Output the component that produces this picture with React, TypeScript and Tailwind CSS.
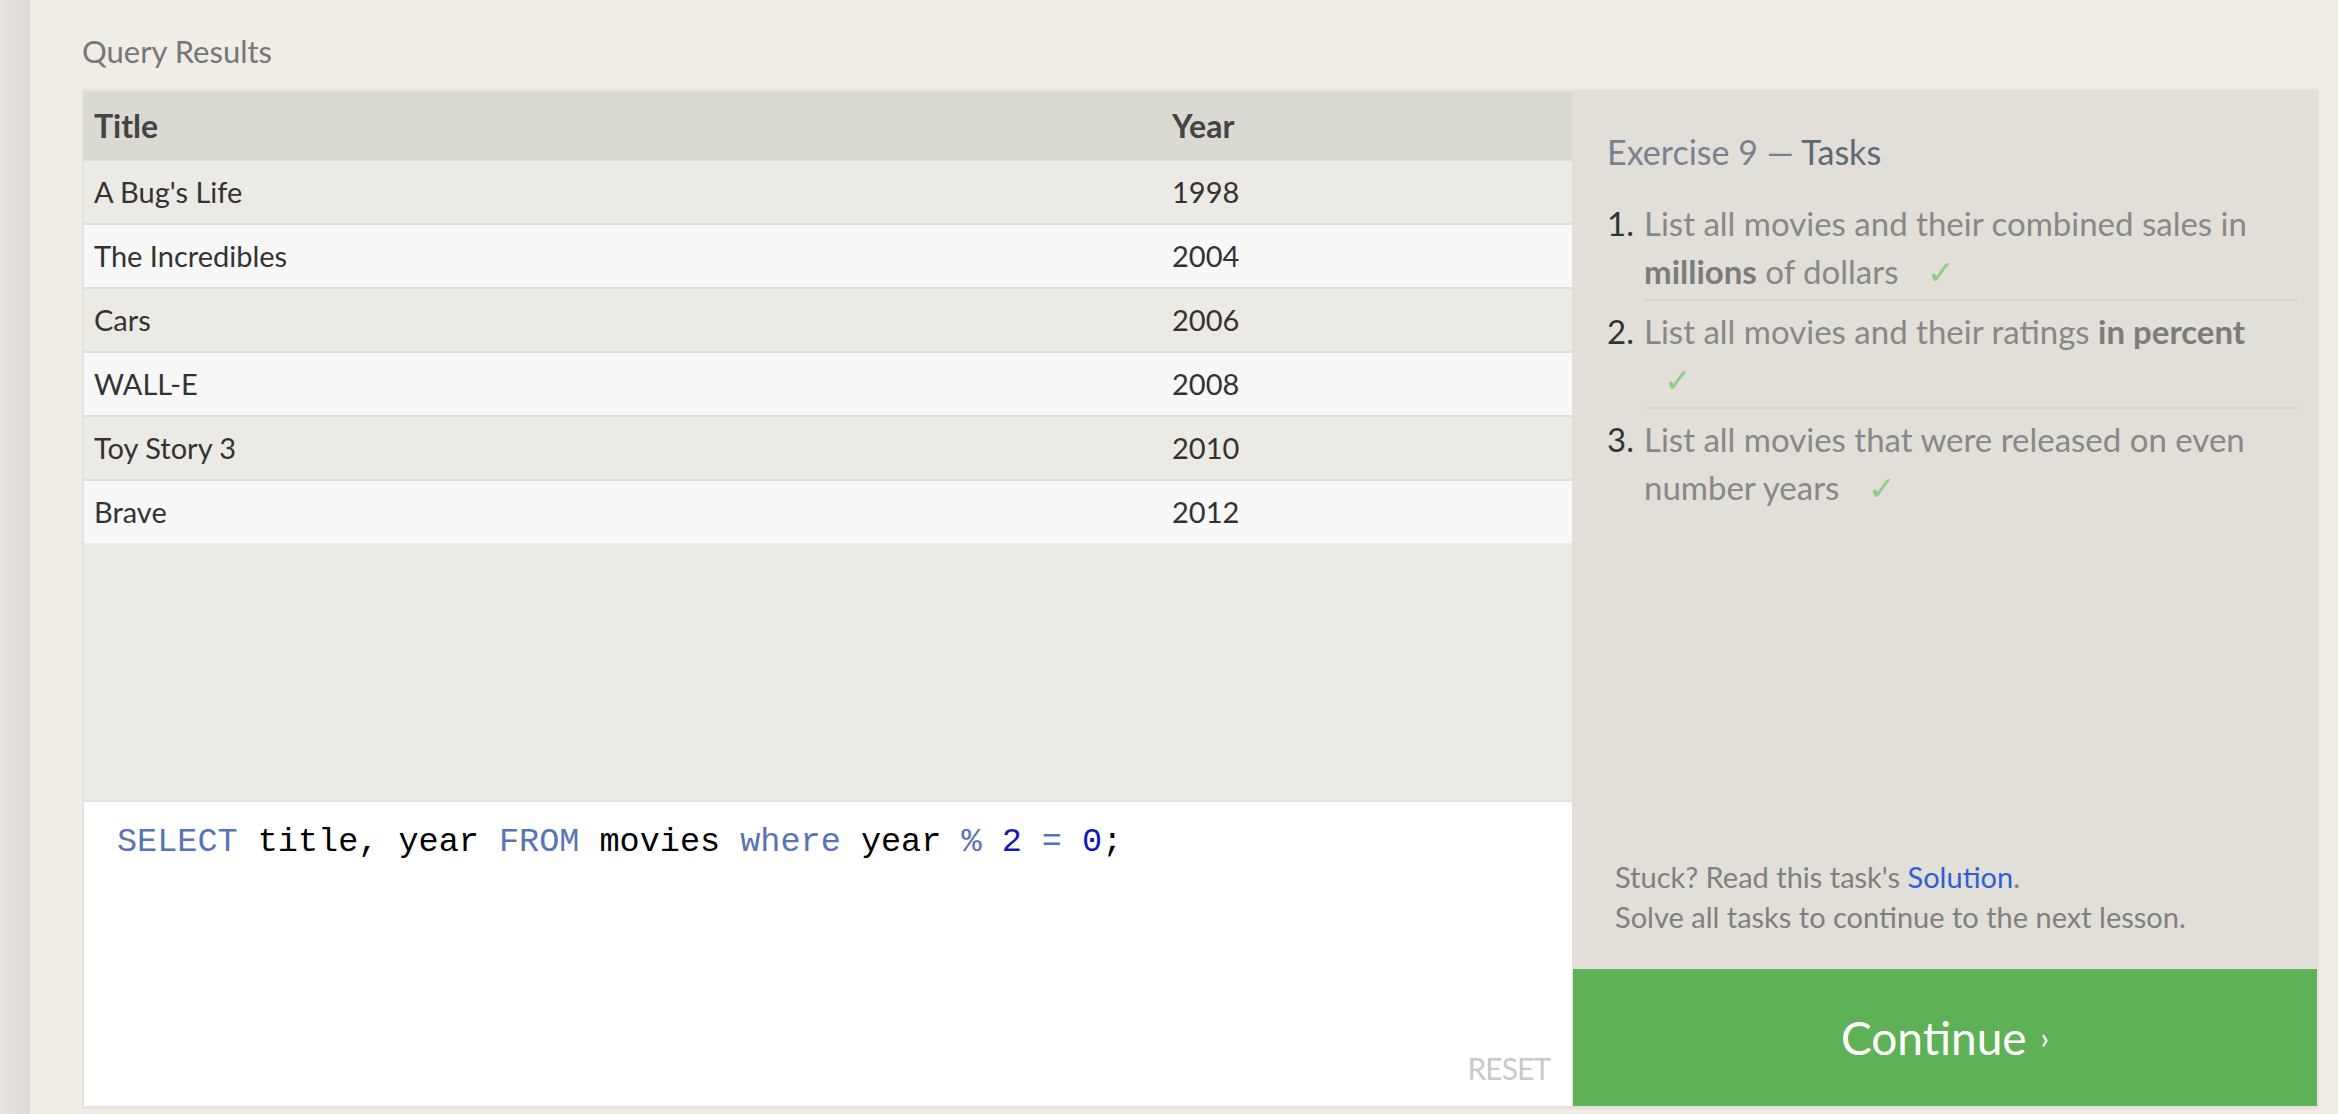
import { Fragment } from 'react';

const sans = { fontFamily: 'Lato, "Liberation Sans", sans-serif' };

const movies = [
  { title: "A Bug's Life", year: 1998 },
  { title: 'The Incredibles', year: 2004 },
  { title: 'Cars', year: 2006 },
  { title: 'WALL-E', year: 2008 },
  { title: 'Toy Story 3', year: 2010 },
  { title: 'Brave', year: 2012 },
];

function Check() {
  return (
    <>
      {' '}
      <span className="ml-[20px] text-[#8fcc88]">✓</span>
    </>
  );
}

export default function App() {
  return (
    <div
      className="flex h-[1114px] w-full overflow-hidden bg-[#efede6]"
      style={sans}
    >
      {/* left gutter */}
      <div className="w-[30px] shrink-0 bg-gradient-to-r from-[#e7e4e0] to-[#dedbd6]" />

      <div className="flex flex-1 flex-col pl-[52px] pr-[19px]">
        <h2 className="mt-[33px] h-[56px] shrink-0 text-[31px] leading-[36px] text-[#777]">
          Query Results
        </h2>

        <div className="flex h-[1020px] shrink-0 border-x-2 border-y-[3px] border-[#e3e2dc]">
          {/* results + editor */}
          <div className="flex w-[1488px] shrink-0 flex-col">
            <div className="h-[708px] bg-[#ebeae4]">
              <div className="grid grid-cols-[1078px_1fr]">
                <div className="flex h-[67px] items-center bg-[#dadad2] pl-[10px] text-[32px] font-bold text-[#444]">
                  Title
                </div>
                <div className="flex h-[67px] items-center bg-[#dadad2] pl-[10px] text-[32px] font-bold text-[#444]">
                  Year
                </div>
                {movies.map((m, i) => (
                  <Fragment key={m.title}>
                    <div
                      className={`flex h-[64px] items-center border-t-2 border-[#dcdcd6] pl-[10px] text-[29px] text-[#333] ${
                        i % 2 === 0 ? 'bg-[#ebeae4]' : 'bg-[#f8f8f8]'
                      }`}
                    >
                      {m.title}
                    </div>
                    <div
                      className={`flex h-[64px] items-center border-t-2 border-[#dcdcd6] pl-[10px] text-[29px] text-[#333] ${
                        i % 2 === 0 ? 'bg-[#ebeae4]' : 'bg-[#f8f8f8]'
                      }`}
                    >
                      {m.year}
                    </div>
                  </Fragment>
                ))}
              </div>
            </div>

            <div className="relative flex-1 border-t-2 border-[#e3e2dc] bg-white pl-[33px] pt-[20px]">
              <pre
                className="text-[33.5px] leading-[40px] text-black"
                style={{ fontFamily: '"Liberation Mono", monospace' }}
              >
                <span className="text-[#5873b6]">SELECT</span> title, year{' '}
                <span className="text-[#5873b6]">FROM</span> movies{' '}
                <span className="text-[#5873b6]">where</span> year{' '}
                <span className="text-[#5873b6]">%</span>{' '}
                <span className="text-[#1717b8]">2</span>{' '}
                <span className="text-[#5873b6]">=</span>{' '}
                <span className="text-[#1717b8]">0</span>;
              </pre>
              <button className="absolute bottom-[15px] right-[22px] text-[30px] tracking-[-1px] text-[#c9c9c9]">
                RESET
              </button>
            </div>
          </div>

          {/* tasks */}
          <div className="flex flex-1 flex-col bg-[#e1dfd8]">
            <div className="flex-1 pl-[35px] pr-[19px] pt-[40px]">
              <h3 className="text-[34px] leading-[40px] text-[#7b8192]">
                Exercise 9 — <span className="text-[#5f6677]">Tasks</span>
              </h3>

              <ol className="mt-[27px] text-[33px] leading-[48px]">
                <li className="flex">
                  <span className="w-[37px] shrink-0 text-[#333]">1.</span>
                  <div className="flex-1 border-b-2 border-[#d8d6cf] pb-[4px] text-[#888]">
                    List all movies and their combined sales in{' '}
                    <b className="text-[#7c7c7c]">millions</b> of dollars
                    <Check />
                  </div>
                </li>
                <li className="mt-[6px] flex">
                  <span className="w-[37px] shrink-0 text-[#333]">2.</span>
                  <div className="flex-1 border-b-2 border-[#d8d6cf] pb-[4px] text-[#888]">
                    List all movies and their ratings{' '}
                    <b className="text-[#7c7c7c]">in percent</b>
                    <Check />
                  </div>
                </li>
                <li className="mt-[6px] flex">
                  <span className="w-[37px] shrink-0 text-[#333]">3.</span>
                  <div className="flex-1 text-[#888]">
                    List all movies that were released on even number years
                    <Check />
                  </div>
                </li>
              </ol>
            </div>

            <div className="px-[43px] pb-[32px] text-[29px] leading-[40px] text-[#808080]">
              <p>
                Stuck? Read this task's{' '}
                <a className="text-[#2f5fd6]">Solution</a>.
              </p>
              <p>Solve all tasks to continue to the next lesson.</p>
            </div>

            <button className="ml-px flex h-[137px] items-center justify-center bg-[#5fb157] text-[46px] text-white">
              Continue <span className="ml-[14px] text-[30px]">›</span>
            </button>
          </div>
        </div>
      </div>
    </div>
  );
}
